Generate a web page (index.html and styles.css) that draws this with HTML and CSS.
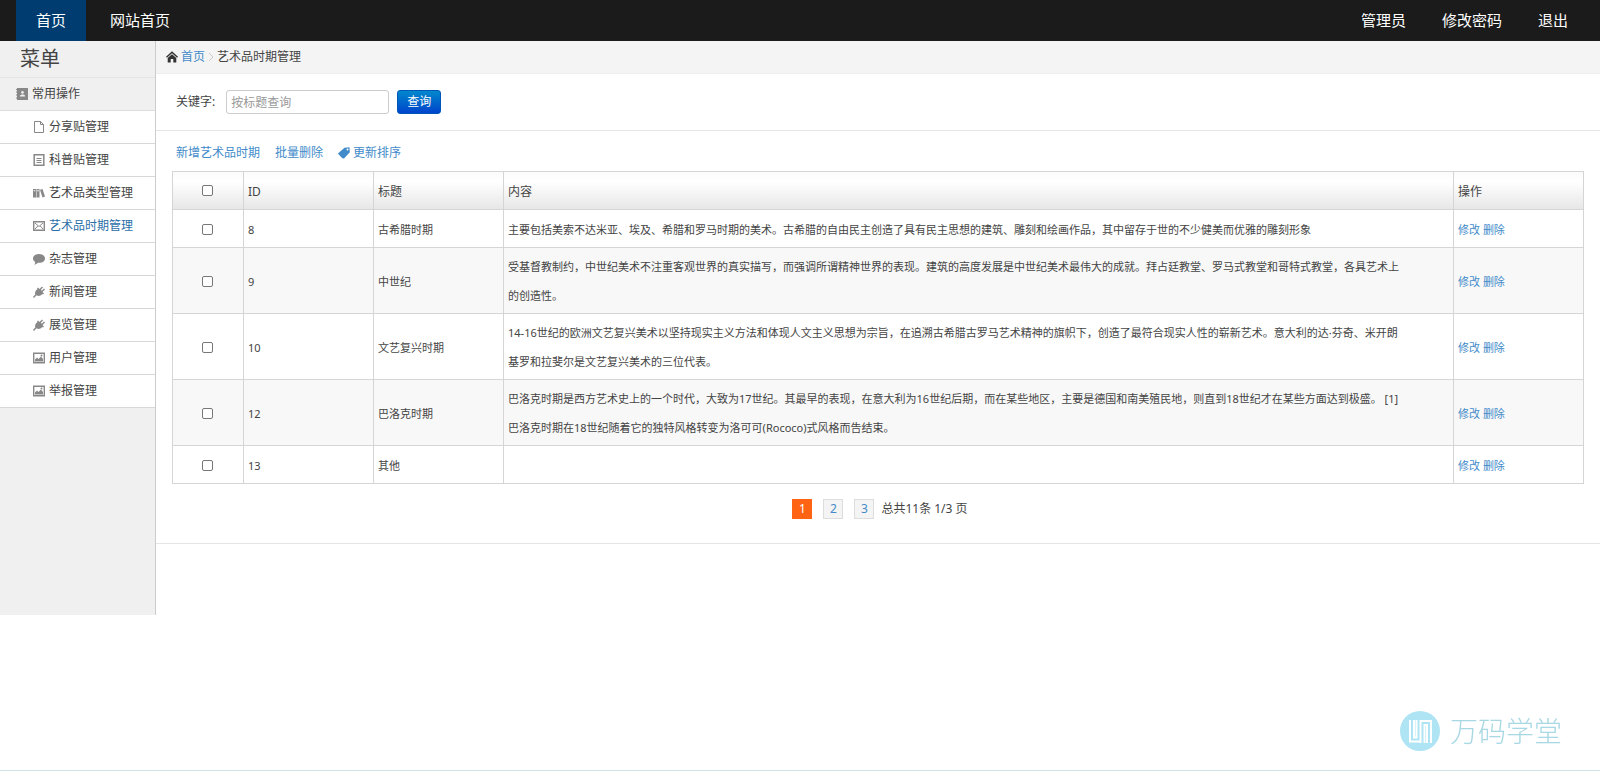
FILE: index.html
```html
<!DOCTYPE html>
<html lang="zh-CN">
<head>
<meta charset="utf-8">
<title>艺术品时期管理</title>
<link rel="stylesheet" href="styles.css">
</head>
<body>
<svg class="sprite" aria-hidden="true">
  <symbol id="i-book" viewBox="0 0 12 12"><path fill="currentColor" fill-rule="evenodd" d="M1 0h11v12H1v-1.500H0v-1h1V7.500H0v-1h1V4.500H0v-1h1V2H0V1h1zM6.500 3a1.400 1.400 0 1 0 .01 0zM4 8.500h5V7.500L7.500 6.500h-2L4 7.500z"/></symbol>
  <symbol id="i-file" viewBox="0 0 12 12"><path fill="none" stroke="currentColor" d="M1.500.5h6l3 3v8h-9zM7.500.5v3h3"/></symbol>
  <symbol id="i-list" viewBox="0 0 12 12"><path fill="none" stroke="currentColor" stroke-width="1.500" d="M1.200.8h9.600v10.400H1.200z"/><path stroke="currentColor" d="M3.500 4.500h5M3.500 6.500h5M3.500 8.500h5"/></symbol>
  <symbol id="i-books" viewBox="0 0 12 12"><path fill="currentColor" fill-rule="evenodd" d="M0 2h3v8.500H0zM.7 3.200v1h1.600v-1zM3.500 2h3v8.500h-3zM4.200 3.200v1h1.600v-1zM7 2.800l2.500-.8 2.500 7.500-2.500 1z"/></symbol>
  <symbol id="i-mail" viewBox="0 0 12 12"><path fill="none" stroke="currentColor" stroke-width="1.400" d="M.7 1.700h10.600v8.600H.7z"/><path fill="none" stroke="currentColor" d="M2 3l4 3.500L10 3M2 9l2.800-3M10 9L7.200 6"/></symbol>
  <symbol id="i-chat" viewBox="0 0 12 12"><path fill="currentColor" d="M6 1c3.500 0 6 1.900 6 4.400s-2.500 4.400-6 4.400l-1-.1C3.800 11 2.500 11.400 1.200 11.500 2 10.700 2.200 10 2.200 8.900.8 8.100 0 6.900 0 5.400 0 2.900 2.500 1 6 1z"/></symbol>
  <symbol id="i-plug" viewBox="0 0 12 12"><path fill="currentColor" d="M4 2.500l1-1L6.500 3 9 .5l1 1L7.800 3.800l1 1L11 2.500l1 1L9.500 6 11 7.500l-1 1-.6-.5C7.500 9.800 5.500 10.500 3.500 9.300L1 12 0 11l2.400-2.700C1.400 6.500 2.400 4.800 4.500 3z"/></symbol>
  <symbol id="i-image" viewBox="0 0 12 12"><path fill="none" stroke="currentColor" stroke-width="1.400" d="M.7 1.200h10.600v9.600H.7z"/><path fill="currentColor" d="M2 9.500V7.500l2-2 1.500 1.500L8 4.500l2 2.500v2.500z"/><circle cx="8.500" cy="3.500" r="1" fill="currentColor"/></symbol>
  <symbol id="i-home" viewBox="0 0 12 12"><path fill="currentColor" d="M6 .3l6 5.500-.9 1L6 2.300.9 6.800 0 5.800zM6 3.300l4.300 3.800V11.500H7.300V8H4.700v3.500h-3V7.100z"/></symbol>
  <symbol id="i-tag" viewBox="0 0 12 12"><path fill="currentColor" fill-rule="evenodd" d="M6.500.8L11.500.3l.3 5L6 11.500 4.300 11.300 .3 7 .2 6.200zM9.500 1.600a.9.9 0 1 0 .01 0z"/></symbol>
</svg>

<header class="topbar">
  <nav class="topnav">
    <a class="topnav-link active" href="#">首页</a>
    <a class="topnav-link" href="#">网站首页</a>
  </nav>
  <nav class="usernav">
    <a href="#">管理员</a>
    <a href="#">修改密码</a>
    <a href="#">退出</a>
  </nav>
</header>

<div class="layout">
  <aside class="sidebar">
    <h1 class="sidebar-title">菜单</h1>
    <h2 class="sidebar-group"><svg class="icon"><use href="#i-book"/></svg>常用操作</h2>
    <ul class="menu">
      <li><a href="#"><svg class="icon"><use href="#i-file"/></svg>分享贴管理</a></li>
      <li><a href="#"><svg class="icon"><use href="#i-list"/></svg>科普贴管理</a></li>
      <li><a href="#"><svg class="icon"><use href="#i-books"/></svg>艺术品类型管理</a></li>
      <li><a class="current" href="#"><svg class="icon"><use href="#i-mail"/></svg>艺术品时期管理</a></li>
      <li><a href="#"><svg class="icon"><use href="#i-chat"/></svg>杂志管理</a></li>
      <li><a href="#"><svg class="icon"><use href="#i-plug"/></svg>新闻管理</a></li>
      <li><a href="#"><svg class="icon"><use href="#i-plug"/></svg>展览管理</a></li>
      <li><a href="#"><svg class="icon"><use href="#i-image"/></svg>用户管理</a></li>
      <li><a href="#"><svg class="icon"><use href="#i-image"/></svg>举报管理</a></li>
    </ul>
  </aside>

  <main class="main">
    <div class="crumbs">
      <svg class="icon"><use href="#i-home"/></svg>
      <a href="#">首页</a>
      <svg class="chevron" viewBox="0 0 6 10"><path d="M1 1l4 4-4 4"/></svg>
      <span>艺术品时期管理</span>
    </div>

    <form class="search">
      <label for="keyword">关键字:</label>
      <input id="keyword" type="text" placeholder="按标题查询">
      <button type="button">查询</button>
    </form>

    <section class="result">
      <div class="tools">
        <a href="#">新增艺术品时期</a>
        <a href="#">批量删除</a>
        <a class="sort" href="#"><svg class="icon"><use href="#i-tag"/></svg>更新排序</a>
      </div>

      <table class="grid">
        <colgroup><col class="col-check"><col class="col-mid"><col class="col-mid"><col><col class="col-mid"></colgroup>
        <thead>
          <tr><th><input type="checkbox" aria-label="全选"></th><th>ID</th><th>标题</th><th>内容</th><th>操作</th></tr>
        </thead>
        <tbody>
          <tr><td><input type="checkbox" aria-label="选择 8"></td><td>8</td><td>古希腊时期</td>
            <td>主要包括美索不达米亚、埃及、希腊和罗马时期的美术。古希腊的自由民主创造了具有民主思想的建筑、雕刻和绘画作品，其中留存于世的不少健美而优雅的雕刻形象</td>
            <td><a href="#">修改</a> <a href="#">删除</a></td></tr>
          <tr><td><input type="checkbox" aria-label="选择 9"></td><td>9</td><td>中世纪</td>
            <td>受基督教制约，中世纪美术不注重客观世界的真实描写，而强调所谓精神世界的表现。建筑的高度发展是中世纪美术最伟大的成就。拜占廷教堂、罗马式教堂和哥特式教堂，各具艺术上<br>的创造性。</td>
            <td><a href="#">修改</a> <a href="#">删除</a></td></tr>
          <tr><td><input type="checkbox" aria-label="选择 10"></td><td>10</td><td>文艺复兴时期</td>
            <td>14-16世纪的欧洲文艺复兴美术以坚持现实主义方法和体现人文主义思想为宗旨，在追溯古希腊古罗马艺术精神的旗帜下，创造了最符合现实人性的崭新艺术。意大利的达·芬奇、米开朗<br>基罗和拉斐尔是文艺复兴美术的三位代表。</td>
            <td><a href="#">修改</a> <a href="#">删除</a></td></tr>
          <tr><td><input type="checkbox" aria-label="选择 12"></td><td>12</td><td>巴洛克时期</td>
            <td>巴洛克时期是西方艺术史上的一个时代，大致为17世纪。其最早的表现，在意大利为16世纪后期，而在某些地区，主要是德国和南美殖民地，则直到18世纪才在某些方面达到极盛。 [1]<br>巴洛克时期在18世纪随着它的独特风格转变为洛可可(Rococo)式风格而告结束。</td>
            <td><a href="#">修改</a> <a href="#">删除</a></td></tr>
          <tr><td><input type="checkbox" aria-label="选择 13"></td><td>13</td><td>其他</td><td></td>
            <td><a href="#">修改</a> <a href="#">删除</a></td></tr>
        </tbody>
      </table>

      <nav class="pager">
        <a class="page on" href="#">1</a>
        <a class="page" href="#">2</a>
        <a class="page" href="#">3</a>
        <span>总共11条 1/3 页</span>
      </nav>
    </section>
  </main>
</div>

<div class="watermark">
  <svg viewBox="0 0 40 40"><circle cx="20" cy="20" r="20" fill="#aee4f3"/><path fill="none" stroke="#fff" stroke-width="2" d="M10 9v21.500h10.500V10H31v22M14 9v17.500h2.500V9M20.500 32V9M24.500 32V14H27v18"/></svg>
  <span>万码学堂</span>
</div>
</body>
</html>
```

FILE: styles.css
```css
* { box-sizing: border-box; }

body {
  margin: 0;
  min-height: 100vh;
  background: #fff;
  color: #444;
  font: 12px/20px "Noto Sans", "Noto Sans CJK SC", sans-serif;
}

a { color: #428bca; text-decoration: none; }
h1, h2, ul { margin: 0; padding: 0; font-weight: 400; list-style: none; }
input, button { font: inherit; }

.sprite { display: none; }
.icon { flex: none; width: 12px; height: 12px; }

.topbar {
  display: flex;
  justify-content: space-between;
  height: 41px;
  padding: 0 32px 0 16px;
  background: #1b1b1b;
  font-size: 15px;
  line-height: 41px;
}
.topbar a { color: #fff; }
.topnav { display: flex; gap: 4px; }
.topnav-link { padding: 0 20px; }
.topnav-link.active { background: #003c70; }
.usernav { display: flex; gap: 36px; }

.layout { display: flex; align-items: flex-start; }

.sidebar {
  flex: none;
  width: 156px;
  min-height: 574px;
  border-right: 1px solid #ccc;
  background: #f0f0f0;
}
.sidebar-title {
  height: 37px;
  padding-left: 20px;
  border-bottom: 1px solid #e5e5e5;
  font-size: 20px;
  line-height: 36px;
}
.sidebar-group {
  display: flex;
  align-items: center;
  gap: 4px;
  height: 33px;
  padding-left: 16px;
  border-bottom: 1px solid #ddd;
  font-size: 12px;
}
.sidebar .icon { color: #888; }
.menu a {
  display: flex;
  align-items: center;
  gap: 4px;
  height: 33px;
  padding-left: 33px;
  border-bottom: 1px solid #d8d8d8;
  background: #fff;
  color: #444;
}
.menu a.current { color: #2b6ea8; }

.main { flex: 1; min-width: 0; }

.crumbs {
  display: flex;
  align-items: center;
  gap: 3px;
  height: 33px;
  padding-left: 10px;
  border-bottom: 1px solid #eee;
  background: #f4f4f4;
}
.crumbs .icon { color: #333; }
.chevron { width: 6px; height: 10px; fill: none; stroke: #ccc; }

.search {
  display: flex;
  align-items: center;
  height: 57px;
  padding-left: 20px;
  border-bottom: 1px solid #e5e5e5;
}
.search input {
  width: 163px;
  height: 24px;
  margin: 0 8px 0 11px;
  padding: 0 4px;
  border: 1px solid #ccc;
  border-radius: 3px;
}
.search input::placeholder { color: #999; }
.search button {
  width: 44px;
  height: 24px;
  padding: 0;
  border: 1px solid #0055b8;
  border-radius: 3px;
  background: linear-gradient(#0088cc, #0044cc);
  color: #fff;
}

.result { padding: 12px 16px 0; border-bottom: 1px solid #e5e5e5; }
.tools { display: flex; gap: 15px; padding: 0 4px; margin-bottom: 8px; }
.sort { display: flex; align-items: center; gap: 3px; }

.grid {
  width: 100%;
  border: 1px solid #d5d5d5;
  border-collapse: collapse;
  table-layout: fixed;
  font-size: 11px;
  line-height: 29px;
}
.col-check { width: 71px; }
.col-mid { width: 130px; }
.grid th, .grid td {
  height: 38px;
  padding: 4px 4px 3px;
  border: 1px solid #d5d5d5;
  text-align: left;
}
.grid th { font-size: 12px; font-weight: 400; }
.grid thead tr { background: linear-gradient(#fafafa, #fff 25%, #e6e6e6); }
.grid tbody tr:nth-child(even) { background: #f8f8f8; }
.grid th:first-child, .grid td:first-child { padding: 2px 6px 4px 4px; text-align: center; }
.grid input {
  appearance: none;
  width: 11px;
  height: 11px;
  margin: 0;
  border: 1px solid #777;
  border-radius: 2px;
  background: #fff;
  vertical-align: middle;
}
.grid input:checked { background: #428bca; }

.pager {
  display: flex;
  align-items: center;
  justify-content: center;
  gap: 11px;
  padding: 15px 0 24px 4px;
}
.page {
  width: 20px;
  height: 20px;
  border: 1px solid #ddd;
  background: #f4f4f4;
  line-height: 18px;
  text-align: center;
}
.page.on { border-color: #ff6415; background: #ff6415; color: #fff; }
.pager span { margin-left: -4px; }

.watermark {
  position: fixed;
  right: 0;
  bottom: 0;
  left: 0;
  display: flex;
  align-items: center;
  justify-content: flex-end;
  gap: 10px;
  padding: 0 38px 19px 0;
  border-bottom: 1px solid #cfe3e8;
  color: #a8d8e4;
  font-size: 28px;
  font-weight: 300;
  line-height: 40px;
  pointer-events: none;
}
.watermark svg { width: 40px; height: 40px; }
```
